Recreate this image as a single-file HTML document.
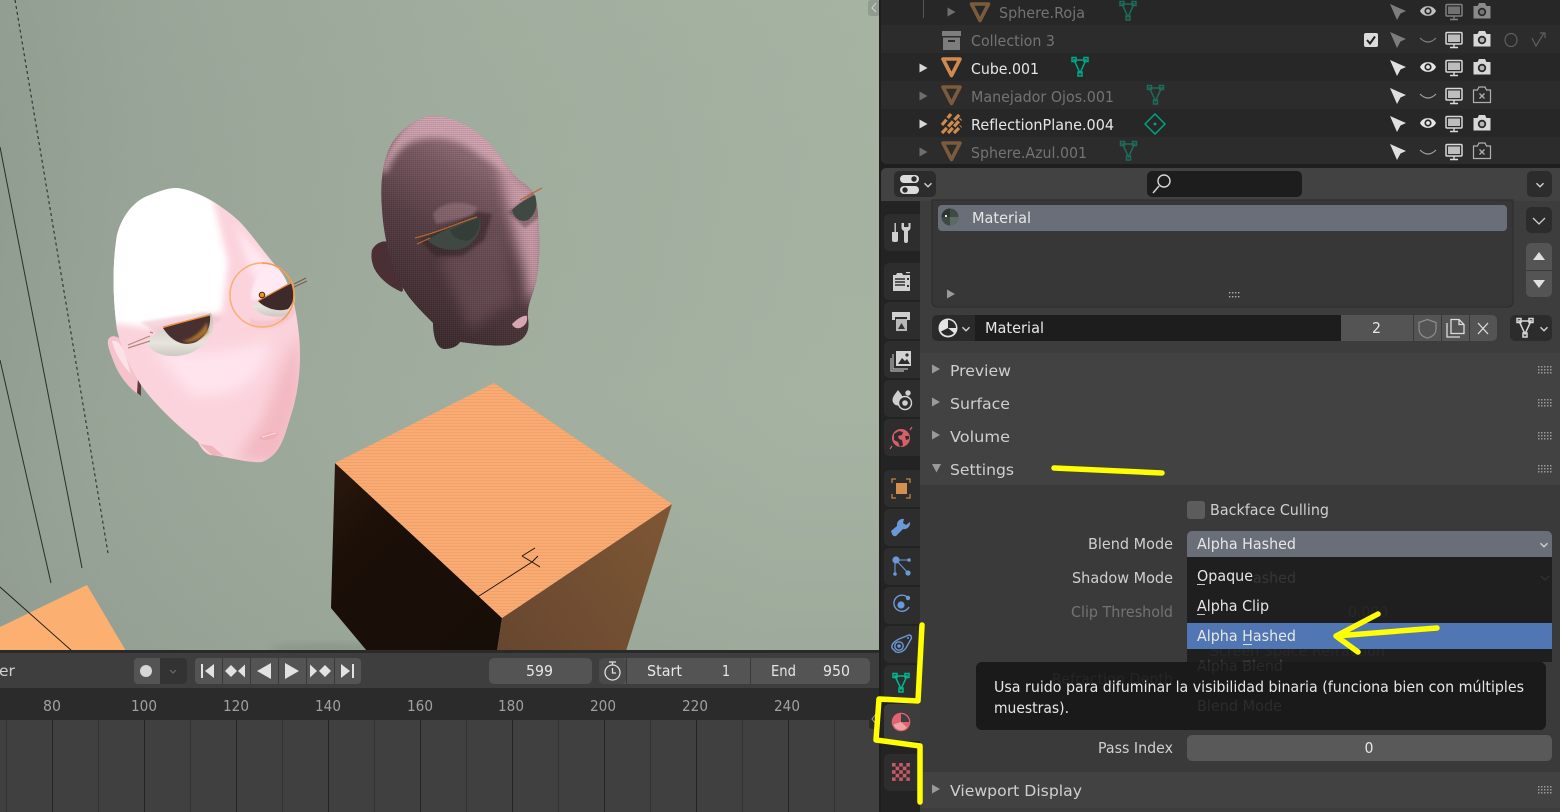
<!DOCTYPE html>
<html lang="es">
<head>
<meta charset="utf-8">
<title>Blender Material Settings</title>
<style>
html,body{margin:0;padding:0;width:1560px;height:812px;overflow:hidden;background:#232323}
svg{display:block;position:absolute;left:0;top:0}
text{font-family:"DejaVu Sans","Liberation Sans",sans-serif;font-size:15.5px;fill:#d8d8d8}
.dim{fill:#737373}.wh{fill:#e6e6e6}.lab{fill:#cfcfcf}.rul{fill:#a0a0a0}
</style>
</head>
<body>
<svg width="1560" height="812" viewBox="0 0 1560 812" xmlns="http://www.w3.org/2000/svg">
<defs>
<linearGradient id="bgx" x1="0" y1="0" x2="1" y2="0.15"><stop offset="0" stop-color="#8d9a8d"/><stop offset=".18" stop-color="#96a396"/><stop offset=".5" stop-color="#9fac9d"/><stop offset="1" stop-color="#a6b2a2"/></linearGradient>
<linearGradient id="bgy" x1="0" y1="0" x2="0" y2="1"><stop offset="0" stop-color="#a9b5a4" stop-opacity=".15"/><stop offset=".6" stop-color="#909c8f" stop-opacity="0"/><stop offset="1" stop-color="#808c80" stop-opacity=".22"/></linearGradient>
<linearGradient id="h2" gradientUnits="userSpaceOnUse" x1="400" y1="330" x2="510" y2="130"><stop offset="0" stop-color="#3a282b"/><stop offset=".45" stop-color="#563d43"/><stop offset=".72" stop-color="#7a5963"/><stop offset="1" stop-color="#b08a96"/></linearGradient>
<linearGradient id="cubeD" gradientUnits="userSpaceOnUse" x1="335" y1="470" x2="500" y2="640"><stop offset="0" stop-color="#2a180c"/><stop offset=".3" stop-color="#1b0f08"/><stop offset="1" stop-color="#180e08"/></linearGradient>
<linearGradient id="cubeR" gradientUnits="userSpaceOnUse" x1="500" y1="640" x2="660" y2="520"><stop offset="0" stop-color="#684730"/><stop offset="1" stop-color="#7c5634"/></linearGradient>
<linearGradient id="scl" x1="0" y1="0" x2="0" y2="1"><stop offset="0" stop-color="#c4c2b8"/><stop offset=".7" stop-color="#e6e4dc"/><stop offset="1" stop-color="#cbc9c1"/></linearGradient>
<pattern id="scan" width="3" height="3" patternUnits="userSpaceOnUse"><rect width="3" height="1" fill="#000" opacity=".05"/></pattern>
<pattern id="grid" width="2" height="2" patternUnits="userSpaceOnUse"><rect width="2" height="1" fill="#000" opacity=".1"/><rect width="1" height="2" fill="#fff" opacity=".04"/></pattern>
<pattern id="chk" x="892" y="763" width="7.2" height="7.2" patternUnits="userSpaceOnUse"><rect x="3.6" width="3.6" height="3.6" fill="#2d2d2d"/><rect y="3.6" width="3.6" height="3.6" fill="#2d2d2d"/></pattern>
<filter id="b1" x="-30%" y="-30%" width="160%" height="160%"><feGaussianBlur stdDeviation="7"/></filter>
<filter id="b3" x="-30%" y="-30%" width="160%" height="160%"><feGaussianBlur stdDeviation="3.5"/></filter>
<filter id="b2" x="-30%" y="-30%" width="160%" height="160%"><feGaussianBlur stdDeviation="1.3"/></filter>
<filter id="b4" x="-30%" y="-30%" width="160%" height="160%"><feGaussianBlur stdDeviation="6"/></filter>
<clipPath id="hc1"><path d="M177,188 C195,190 220,203 240,222 C255,238 268,258 278,268 C290,282 296,305 299,335 C302,365 298,395 290,418 C284,438 280,455 262,462 C245,463 225,456 210,455 C203,452 200,446 198,442 C180,428 155,405 141,385 C130,368 122,350 117,330 C113,300 112,265 117,235 C122,215 135,200 150,195 C160,191 168,188 177,188 Z"/></clipPath>
<clipPath id="hc"><path d="M435,116 C455,117 478,130 493,147 C505,162 512,175 522,182 C532,188 537,195 538,215 C540,240 540,262 536,282 C532,298 527,305 528,318 C530,330 527,340 510,345 C495,347 478,344 460,342 C458,346 452,349 444,349 C436,348 433,335 433,323 C420,310 410,300 403,288 C392,270 384,240 382,210 C380,185 382,160 392,143 C402,128 418,116 435,116Z"/></clipPath>

<g id="obj"><path d="M-8.5,-8 H8.5 L0,8.5 Z" fill="none" stroke="currentColor" stroke-width="3.6" stroke-linejoin="round"/></g>
<g id="mesh" fill="none" stroke="currentColor" stroke-width="1.5"><path d="M-6,-6 H6 L0,7 Z"/><rect x="-8" y="-8.5" width="4" height="4" /><rect x="4" y="-8.5" width="4" height="4"/><rect x="-2" y="6" width="4" height="4"/></g>
<g id="arrow"><path d="M-8,-8 L8,-1 L2.5,1.5 L-1,8 Z" fill="currentColor"/></g>
<g id="eye"><path d="M-8,0 C-5,-6.5 5,-6.5 8,0 C5,6.5 -5,6.5 -8,0 Z" fill="currentColor"/><circle r="3.6" fill="#2a2a2a"/><circle r="1.9" fill="currentColor"/></g>
<g id="hide"><path d="M-8,-2 Q0,6 8,-2" fill="none" stroke="currentColor" stroke-width="1.2"/></g>
<g id="mon"><rect x="-8" y="-7.5" width="16" height="11.5" rx="1" fill="none" stroke="currentColor" stroke-width="1.5"/><rect x="-6" y="-5.5" width="12" height="7.5" fill="currentColor" opacity=".85"/><path d="M0,4 V7 M-4,7.5 H4" stroke="currentColor" stroke-width="1.4"/></g>
<g id="cam"><path d="M-8.5,-5 H-4.5 L-3,-8 H3 L4.5,-5 H8.5 V7.5 H-8.5 Z" fill="currentColor"/><circle cy="1" r="4.2" fill="#2a2a2a"/><circle cy="1" r="2.4" fill="currentColor" opacity=".8"/></g>
<g id="camx"><path d="M-8.5,-5 H-4.5 L-3,-8 H3 L4.5,-5 H8.5 V7.5 H-8.5 Z" fill="none" stroke="currentColor" stroke-width="1.2"/><path d="M-2.5,-1.5 L2.5,3.5 M2.5,-1.5 L-2.5,3.5" stroke="currentColor" stroke-width="1.3"/></g>
<g id="chev"><path d="M-3.5,-1.8 L0,1.8 L3.5,-1.8" fill="none" stroke="#d0d0d0" stroke-width="1.4"/></g>
<g id="tr"><path d="M-4,-4.5 L4,0 L-4,4.5 Z" fill="currentColor"/></g>
<g id="grip" fill="#9a9a9a"><rect x="0" y="0" width="1.5" height="1.5"/><rect x="3" y="0" width="1.5" height="1.5"/><rect x="6" y="0" width="1.5" height="1.5"/><rect x="9" y="0" width="1.5" height="1.5"/><rect x="12" y="0" width="1.5" height="1.5"/><rect x="0" y="3" width="1.5" height="1.5"/><rect x="3" y="3" width="1.5" height="1.5"/><rect x="6" y="3" width="1.5" height="1.5"/><rect x="9" y="3" width="1.5" height="1.5"/><rect x="12" y="3" width="1.5" height="1.5"/><rect x="0" y="6" width="1.5" height="1.5"/><rect x="3" y="6" width="1.5" height="1.5"/><rect x="6" y="6" width="1.5" height="1.5"/><rect x="9" y="6" width="1.5" height="1.5"/><rect x="12" y="6" width="1.5" height="1.5"/></g>
</defs>

<!-- VIEWPORT -->
<rect x="0" y="0" width="880" height="651" fill="url(#bgx)"/>
<rect x="0" y="0" width="880" height="651" fill="url(#bgy)"/>

<!-- lines -->
<path d="M0,147 L82,568" stroke="#26302a" stroke-width="1" fill="none"/>
<path d="M0,360 L51,583" stroke="#26302a" stroke-width="1" fill="none"/>
<path d="M15,0 L108,553" stroke="#1d2420" stroke-width="1" stroke-dasharray="3 3" fill="none"/>

<!-- plane -->
<path d="M0,627 L87,585 L126,651 H0 Z" fill="#fbb071"/>
<path d="M0,587 L72,651" stroke="#1a1a14" stroke-width=".9" fill="none"/>

<!-- cube -->
<ellipse cx="330" cy="648" rx="60" ry="5" fill="#68725f" opacity=".25" filter="url(#b3)"/>
<path d="M335,463 L502,618 L497,651 H367 L331,608 Z" fill="url(#cubeD)"/>
<path d="M672,504 L502,618 L497,651 H626 Z" fill="url(#cubeR)"/>
<path d="M494,383 L672,504 L502,618 L335,463 Z" fill="#fbab72"/>
<path d="M494,383 L672,504 L502,618 L335,463 Z" fill="url(#scan)"/>
<path d="M395,650 L532,562 M522,556 L535,548 M522,556 L532,562 L540,567 M532,562 L538,556" stroke="#15100a" stroke-width=".9" fill="none"/>

<!-- head 1 -->
<path d="M108,340 C110,335 116,335 122,340 C130,350 136,370 141,385 L141,396 C130,390 118,375 113,360 C110,352 107,345 108,340Z" fill="#f6c2cb"/>
<path d="M112,341 C117,339 122,345 126,356 C128,364 130,370 131,374 C123,366 115,354 112,341Z" fill="#fbe2e8"/>
<path d="M138,378 L141,385 L141,396 L137,393 Z" fill="#5a3a40"/>
<path d="M177,188 C195,190 220,203 240,222 C255,238 268,258 278,268 C290,282 296,305 299,335 C302,365 298,395 290,418 C284,438 280,455 262,462 C245,463 225,456 210,455 C203,452 200,446 198,442 C180,428 155,405 141,385 C130,368 122,350 117,330 C113,300 112,265 117,235 C122,215 135,200 150,195 C160,191 168,188 177,188 Z" fill="#fbd3dc"/>
<g clip-path="url(#hc1)">
<path d="M300,330 L302,400 L280,465 L235,460 L262,420 L285,360 Z" fill="#f3b9c2" filter="url(#b1)"/>
<path d="M150,345 C190,360 240,350 270,340 C265,385 230,400 190,395 Z" fill="#ffe4ee" filter="url(#b1)"/>
<path d="M235,225 C255,250 280,270 292,300 L270,300 L250,270 Z" fill="#ffe6f0" filter="url(#b3)"/>
<path d="M105,265 L125,200 L177,180 L212,196 L228,262 L222,312 L150,328 L105,322 Z" fill="#fff" filter="url(#b3)"/>
<path d="M105,270 L125,205 L177,185 L205,200 L218,262 L212,305 L150,320 L105,315 Z" fill="#fff" filter="url(#b3)"/>
<path d="M140,322 L205,312 L222,318 L215,324 L160,335 Z" fill="#eec4cc" opacity=".6" filter="url(#b2)"/>
<path d="M252,300 C248,290 258,272 270,262 L295,284 L296,300 Z" fill="#ffe9f2" filter="url(#b2)"/>
<path d="M250,318 C265,325 285,320 296,300 L296,312 C285,328 262,332 250,325 Z" fill="#efb8c2" opacity=".5" filter="url(#b2)"/>
</g>
<!-- eyes head 1 -->
<path d="M146,342 C155,331 180,322 211,313 C218,330 207,347 188,354 C170,359 152,355 146,342 Z" fill="url(#scl)"/>
<path d="M163,328 L210,315 C211,328 206,336 196,342 C184,347 172,342 163,328 Z" fill="#47302f"/>
<path d="M182,341 C192,340 202,331 207,322 L208,332 C200,340 190,344 182,341 Z" fill="#a8702f" filter="url(#b2)"/>
<path d="M163,327 L210,315" stroke="#f08c2c" stroke-width="1.2"/>
<path d="M128,345 L150,336 M128,348 L150,341 M150,332 L153,333" stroke="#b08a7c" stroke-width="1.2" fill="none"/>
<path d="M252,306 L258,300 L292,282 C297,295 296,306 288,314 C278,319 260,317 252,306 Z" fill="url(#scl)"/>
<path d="M258,301 L292,283 C296,292 294,303 288,309 C278,312 266,309 258,301 Z" fill="#3f2a2b"/>
<path d="M258,301 L292,282" stroke="#f08c2c" stroke-width="1.1"/>
<path d="M294,284 L306,278 M294,287 L307,281" stroke="#7a5a4a" stroke-width="1" fill="none"/>
<circle cx="262" cy="295" r="32" fill="none" stroke="#fbae70" stroke-width="1.5"/>
<path d="M262,263 A32,32 0 0 1 294,295 A32,32 0 0 1 282,320" fill="none" stroke="#f79a4c" stroke-width="1.4"/>
<circle cx="262" cy="295" r="2.8" fill="#f5921c" stroke="#2a1a0a" stroke-width=".9"/>
<!-- mouth -->
<path d="M259,438 C264,433 272,430 278,433 L276,437 C270,440 264,442 259,438 Z" fill="#efb0b6"/>
<path d="M262,437 L276,433" stroke="#fbdde0" stroke-width="1"/>
<path d="M200,444 L212,455 L224,456 L212,446 Z" fill="#efb4bc"/>

<!-- head 2 -->
<path d="M372,250 C376,242 386,238 393,245 C398,252 401,275 403,290 L402,292 C392,288 380,280 374,268 C371,260 371,255 372,250Z" fill="#4a3034"/>
<path d="M435,116 C455,117 478,130 493,147 C505,162 512,175 522,182 C532,188 537,195 538,215 C540,240 540,262 536,282 C532,298 527,305 528,318 C530,330 527,340 510,345 C495,347 478,344 460,342 C458,346 452,349 444,349 C436,348 433,335 433,323 C420,310 410,300 403,288 C392,270 384,240 382,210 C380,185 382,160 392,143 C402,128 418,116 435,116Z" fill="url(#h2)"/>
<g clip-path="url(#hc)">
<path d="M440,260 L500,230 L515,300 L470,330 Z" fill="#7a5a62" opacity=".5" filter="url(#b4)"/>
<path d="M495,150 L525,182 L545,195 L545,285 L528,305 L524,270 L512,225 Z" fill="#d9a8b6" opacity=".85" filter="url(#b4)"/>
<path d="M380,170 C390,140 410,112 435,110 C462,110 484,126 502,152 L512,176 L480,156 C460,138 435,134 412,142 C400,148 392,158 386,174 Z" fill="#e0b0be" opacity=".8" filter="url(#b3)"/>
<path d="M433,214 C442,200 465,200 478,208 L472,216 L436,224 Z" fill="#a68089" opacity=".5" filter="url(#b2)"/>
<path d="M420,240 L478,212 L492,214 L484,240 L462,256 L435,256 Z" fill="#2c1d1f" opacity=".5" filter="url(#b2)"/>
<path d="M508,212 L536,190 L542,215 L525,228 Z" fill="#2c1d1f" opacity=".35" filter="url(#b2)"/>
<rect x="372" y="100" width="188" height="260" fill="url(#grid)"/>
</g>
<path d="M427,240 C440,232 462,222 479,217 C483,228 478,238 468,246 C458,252 440,252 427,240Z" fill="#3f4842"/>
<path d="M450,230 C460,225 472,220 479,218 C481,226 478,234 470,240 C462,242 452,238 450,230 Z" fill="#353d38"/>
<path d="M512,210 C518,204 528,198 535,195 C538,205 536,214 528,220 C520,223 514,218 512,210Z" fill="#3f4842"/>
<path d="M415,238 C440,232 460,222 477,217 M520,200 L542,188 M417,244 L430,238" stroke="#b8682c" stroke-width="1.2" fill="none"/>
<path d="M512,324 C518,318 524,315 527,316 C528,322 525,326 520,328 C516,329 513,327 512,324 Z" fill="#d8a6b0"/>

<!-- viewport corner widget -->
<rect x="868" y="0" width="12" height="16" rx="3" fill="#8f9c8f"/>
<path d="M876,3 L872,8 L876,12" fill="none" stroke="#cfd5cb" stroke-width="1"/>

<!-- TIMELINE -->
<rect x="0" y="650" width="880" height="4" fill="#2a2a2a"/>
<rect x="0" y="653" width="880" height="35" fill="#3e3e3e"/>
<rect x="0" y="688" width="880" height="32" fill="#2b2b2b"/>
<rect x="0" y="720" width="880" height="92" fill="#404040"/>
<g stroke="#333" stroke-width="1"><path d="M6.5,720V812M98.5,720V812M190.5,720V812M282.5,720V812M374.5,720V812M466.5,720V812M558.5,720V812M650.5,720V812M742.5,720V812M834.5,720V812"/></g>
<g stroke="#242424" stroke-width="1"><path d="M52.5,720V812M144.5,720V812M236.5,720V812M328.5,720V812M420.5,720V812M512.5,720V812M604.5,720V812M696.5,720V812M788.5,720V812"/></g>
<text x="-1" y="676" class="lab">er</text>
<g>
<rect x="134" y="658" width="53" height="26" rx="4" fill="#545454"/>
<path d="M160,658 H183 a4,4 0 0 1 4,4 V680 a4,4 0 0 1 -4,4 H160 Z" fill="#333"/>
<ellipse cx="146" cy="671" rx="6" ry="6" fill="#d6d6d6"/>
<path d="M170,670 L173,673 L176,670" fill="none" stroke="#6a6a6a" stroke-width="1.2"/>
<rect x="195" y="658" width="166" height="26" rx="4" fill="#545454"/>
<path d="M222.5,658V684M250.5,658V684M278.5,658V684M306.5,658V684M334.5,658V684" stroke="#3a3a3a" stroke-width="1"/>
<g fill="#e2e2e2">
<rect x="201" y="664" width="2" height="14"/><path d="M214,664 V678 L205,671 Z"/>
<path d="M225,671 L231,665 L237,671 L231,677 Z"/><path d="M245,664.5 V677.5 L238,671 Z"/>
<path d="M271,663 V679 L257,671 Z"/>
<path d="M285,663 V679 L299,671 Z"/>
<path d="M310,664.5 V677.5 L317,671 Z"/><path d="M319,671 L325,665 L331,671 L325,677 Z"/>
<path d="M341,664 V678 L350,671 Z"/><rect x="352" y="664" width="2" height="14"/>
</g>
<rect x="489" y="658" width="103" height="26" rx="5" fill="#545454"/>
<text x="526" y="676" class="wh" textLength="27" lengthAdjust="spacingAndGlyphs">599</text>
<rect x="599" y="658" width="271" height="26" rx="5" fill="#545454"/>
<rect x="599" y="658" width="27" height="26" rx="5" fill="#4a4a4a"/>
<path d="M626.5,658V684M750.5,658V684" stroke="#3a3a3a" stroke-width="1"/>
<g fill="none" stroke="#dedede" stroke-width="1.3"><circle cx="612.5" cy="672.5" r="7.5"/><path d="M612.5,668 V673 H616 M609,662 H616 M612.5,662 V665"/></g>
<text x="647" y="676" class="wh" textLength="35" lengthAdjust="spacingAndGlyphs">Start</text>
<text x="722" y="676" class="wh" textLength="8" lengthAdjust="spacingAndGlyphs">1</text>
<text x="771" y="676" class="wh" textLength="25" lengthAdjust="spacingAndGlyphs">End</text>
<text x="823" y="676" class="wh" textLength="27" lengthAdjust="spacingAndGlyphs">950</text>
</g>
<g class="rul">
<text x="43" y="711" class="rul" textLength="18" lengthAdjust="spacingAndGlyphs">80</text>
<text x="131" y="711" class="rul" textLength="26" lengthAdjust="spacingAndGlyphs">100</text>
<text x="223" y="711" class="rul" textLength="26" lengthAdjust="spacingAndGlyphs">120</text>
<text x="315" y="711" class="rul" textLength="26" lengthAdjust="spacingAndGlyphs">140</text>
<text x="407" y="711" class="rul" textLength="26" lengthAdjust="spacingAndGlyphs">160</text>
<text x="498" y="711" class="rul" textLength="26" lengthAdjust="spacingAndGlyphs">180</text>
<text x="590" y="711" class="rul" textLength="26" lengthAdjust="spacingAndGlyphs">200</text>
<text x="682" y="711" class="rul" textLength="26" lengthAdjust="spacingAndGlyphs">220</text>
<text x="774" y="711" class="rul" textLength="26" lengthAdjust="spacingAndGlyphs">240</text>
</g>
<rect x="869" y="709" width="11" height="20" rx="3" fill="#2b2b2b"/>
<path d="M876,714 L872,719 L876,724" fill="none" stroke="#a0a0a0" stroke-width="1"/>

<!-- RIGHT COLUMN BG -->
<rect x="879" y="0" width="681" height="812" fill="#1e1e1e"/>

<!-- OUTLINER -->
<rect x="881" y="-3" width="679" height="28" fill="#272727"/>
<rect x="881" y="25" width="679" height="28" fill="#2c2c2c"/>
<rect x="881" y="53" width="679" height="28" fill="#272727"/>
<rect x="881" y="81" width="679" height="28" fill="#2c2c2c"/>
<rect x="881" y="109" width="679" height="28" fill="#272727"/>
<path d="M881,137 H1560 V164 H886 a5,5 0 0 1 -5,-5 Z" fill="#2c2c2c"/>
<path d="M923.5,0V18" stroke="#555" stroke-width="1"/>

<use href="#tr" x="951.5" y="12" color="#6e6e6e"/>
<use href="#obj" x="980" y="12" color="#7c5a3c"/>
<text x="999" y="18" class="dim" textLength="86" lengthAdjust="spacingAndGlyphs">Sphere.Roja</text>
<use href="#mesh" x="1128" y="10" color="#1d6b58"/>

<g fill="#7d7d7d"><rect x="942" y="31" width="19" height="5"/><path d="M943,37.5 H960 V50 H943 Z"/></g>
<rect x="948" y="40" width="7" height="2" fill="#2c2c2c"/>
<text x="971" y="46" class="dim" textLength="84" lengthAdjust="spacingAndGlyphs">Collection 3</text>

<use href="#tr" x="923.5" y="68" color="#d8d8d8"/>
<use href="#obj" x="951.5" y="67" color="#d08a4e"/>
<text x="971" y="74" class="wh" textLength="68" lengthAdjust="spacingAndGlyphs">Cube.001</text>
<use href="#mesh" x="1080" y="66" color="#00a887"/>

<use href="#tr" x="923.5" y="96" color="#6e6e6e"/>
<use href="#obj" x="951.5" y="95" color="#7c5a3c"/>
<text x="971" y="102" class="dim" textLength="143" lengthAdjust="spacingAndGlyphs">Manejador Ojos.001</text>
<use href="#mesh" x="1155.5" y="94" color="#1d6b58"/>

<use href="#tr" x="923.5" y="124" color="#d8d8d8"/>
<g stroke="#d08a4e" stroke-width="3.2" fill="none" stroke-dasharray="7 2"><path d="M942,125 L951,114 M942,133 L960,114 M948,133 L961,119 M954,133 L961,126"/></g>
<text x="971" y="130" class="wh" textLength="143" lengthAdjust="spacingAndGlyphs">ReflectionPlane.004</text>
<path d="M1155,114 L1165,124 L1155,134 L1145,124 Z" fill="none" stroke="#00a887" stroke-width="1.4"/>
<circle cx="1155" cy="124" r="1.4" fill="#00a887"/>

<use href="#tr" x="923.5" y="152" color="#6e6e6e"/>
<use href="#obj" x="951.5" y="151" color="#7c5a3c"/>
<text x="971" y="158" class="dim" textLength="116" lengthAdjust="spacingAndGlyphs">Sphere.Azul.001</text>
<use href="#mesh" x="1128.5" y="150" color="#1d6b58"/>

<!-- right outliner icons -->
<use href="#arrow" x="1398" y="12" color="#7d7d7d"/><use href="#eye" x="1428" y="11" color="#c0c0c0"/><use href="#mon" x="1454" y="12" color="#808080"/><use href="#cam" x="1482" y="11" color="#8a8a8a"/>
<rect x="1364" y="33" width="14" height="14" rx="2" fill="#dcdcdc"/><path d="M1367,40 L1370,43.5 L1375,36.5" fill="none" stroke="#222" stroke-width="2"/>
<use href="#arrow" x="1398" y="40" color="#7d7d7d"/><use href="#hide" x="1428" y="40" color="#808080"/><use href="#mon" x="1454" y="40" color="#d8d8d8"/><use href="#cam" x="1482" y="39" color="#d8d8d8"/>
<ellipse cx="1511" cy="40" rx="6" ry="6.5" fill="none" stroke="#5f5f5f" stroke-width="1.2"/><path d="M1532,38 L1536,46 L1544,33 M1540,33 H1545 V38" fill="none" stroke="#5f5f5f" stroke-width="1.2"/>
<use href="#arrow" x="1398" y="68" color="#e0e0e0"/><use href="#eye" x="1428" y="67" color="#e6e6e6"/><use href="#mon" x="1454" y="68" color="#d8d8d8"/><use href="#cam" x="1482" y="67" color="#d8d8d8"/>
<use href="#arrow" x="1398" y="96" color="#e0e0e0"/><use href="#hide" x="1428" y="96" color="#a0a0a0"/><use href="#mon" x="1454" y="96" color="#d8d8d8"/><use href="#camx" x="1482" y="95" color="#b0b0b0"/>
<use href="#arrow" x="1398" y="124" color="#e0e0e0"/><use href="#eye" x="1428" y="123" color="#e6e6e6"/><use href="#mon" x="1454" y="124" color="#d8d8d8"/><use href="#cam" x="1482" y="123" color="#d8d8d8"/>
<use href="#arrow" x="1398" y="152" color="#e0e0e0"/><use href="#hide" x="1428" y="152" color="#a0a0a0"/><use href="#mon" x="1454" y="152" color="#d8d8d8"/><use href="#camx" x="1482" y="151" color="#b0b0b0"/>

<!-- PROPERTIES HEADER -->
<path d="M881,173 a5,5 0 0 1 5,-5 H1560 V201 H881 Z" fill="#424242"/>
<rect x="894" y="171" width="42" height="26" rx="5" fill="#2c2c2c"/>
<rect x="900" y="175" width="19" height="8" rx="4" fill="#dcdcdc"/><circle cx="914" cy="179" r="2.7" fill="#2c2c2c"/>
<rect x="900" y="186" width="19" height="8" rx="4" fill="#dcdcdc"/><circle cx="905" cy="190" r="2.7" fill="#2c2c2c"/>
<use href="#chev" x="928" y="185"/>
<rect x="1147" y="171" width="155" height="26" rx="5" fill="#1d1d1d"/>
<circle cx="1164" cy="181" r="6" fill="none" stroke="#d8d8d8" stroke-width="1.4"/><path d="M1159,186 L1153,193" stroke="#d8d8d8" stroke-width="1.4"/>
<rect x="1527" y="171" width="25" height="26" rx="5" fill="#2c2c2c"/><use href="#chev" x="1540" y="185"/>

<!-- TABS -->
<rect x="881" y="201" width="39" height="611" fill="#232323"/>
<g fill="#2d2d2d">
<path d="M889,214 H920 V251 H889 a5,5 0 0 1 -5,-5 V219 a5,5 0 0 1 5,-5Z"/>
<path d="M889,263 H920 V300 H889 a5,5 0 0 1 -5,-5 V268 a5,5 0 0 1 5,-5Z"/>
<path d="M889,302 H920 V339 H889 a5,5 0 0 1 -5,-5 V307 a5,5 0 0 1 5,-5Z"/>
<path d="M889,341 H920 V378 H889 a5,5 0 0 1 -5,-5 V346 a5,5 0 0 1 5,-5Z"/>
<path d="M889,380 H920 V417 H889 a5,5 0 0 1 -5,-5 V385 a5,5 0 0 1 5,-5Z"/>
<path d="M889,419 H920 V456 H889 a5,5 0 0 1 -5,-5 V424 a5,5 0 0 1 5,-5Z"/>
<path d="M889,470 H920 V507 H889 a5,5 0 0 1 -5,-5 V475 a5,5 0 0 1 5,-5Z"/>
<path d="M889,509 H920 V546 H889 a5,5 0 0 1 -5,-5 V514 a5,5 0 0 1 5,-5Z"/>
<path d="M889,548 H920 V585 H889 a5,5 0 0 1 -5,-5 V553 a5,5 0 0 1 5,-5Z"/>
<path d="M889,587 H920 V624 H889 a5,5 0 0 1 -5,-5 V592 a5,5 0 0 1 5,-5Z"/>
<path d="M889,626 H920 V663 H889 a5,5 0 0 1 -5,-5 V631 a5,5 0 0 1 5,-5Z"/>
<path d="M889,665 H920 V702 H889 a5,5 0 0 1 -5,-5 V670 a5,5 0 0 1 5,-5Z"/>
<path d="M889,754 H920 V791 H889 a5,5 0 0 1 -5,-5 V759 a5,5 0 0 1 5,-5Z"/>
</g>
<path d="M889,704 H920 V741 H889 a5,5 0 0 1 -5,-5 V709 a5,5 0 0 1 5,-5Z" fill="#3d3d3d"/>

<!-- tab icons -->
<g fill="#cfcfcf">
<rect x="894.5" y="223" width="1.4" height="9"/><path d="M892,232 h6 v8 a2,2 0 0 1 -2,2 h-2 a2,2 0 0 1 -2,-2 Z"/>
<path d="M901.5,223 v4 a4,4 0 0 0 2.5,4 v10 a2,2 0 0 0 4,0 v-10 a4,4 0 0 0 2.5,-4 v-4 l-2,0 v4 h-4.5 v-4 Z"/>
<path d="M893,275 h3 l1,-2 h5 l1,2 h7 v16 h-17 Z"/><rect x="906" y="272" width="4" height="1.2"/><path d="M895,279 h10 M895,282 h10 M895,285 h10" stroke="#2d2d2d" stroke-width="1.4"/><rect x="907" y="278" width="2" height="2" fill="#2d2d2d"/><rect x="907" y="285" width="2" height="2" fill="#2d2d2d"/>
<path d="M892,312 h18 v8 h-3 v-3 h-12 v3 h-3 Z"/><rect x="896" y="319" width="11" height="12" fill="#b8b8b8"/><path d="M898,329 l3.5,-6 l3.5,6 Z" fill="#333"/>
<rect x="896" y="351" width="15" height="15" fill="#d4d4d4"/><path d="M898,364 l4,-6 l3,3 l2,-2 l3,5 Z" fill="#2d2d2d"/><circle cx="907" cy="355" r="1.6" fill="#2d2d2d"/>
<path d="M893,354 v15 h15 M891,358 v13 h13" fill="none" stroke="#b8b8b8" stroke-width="1.2"/>
<path d="M898,390 c3,4 5.5,7 5.5,10 a5.5,5.5 0 0 1 -11,0 c0,-3 2.500,-6 5.500,-10 Z"/><circle cx="908" cy="393" r="2.7"/><circle cx="905" cy="403" r="6.5" fill="#2d2d2d" stroke="#d4d4d4" stroke-width="1.4"/><circle cx="905" cy="403" r="2.8"/>
</g>
<g><circle cx="901" cy="438" r="9" fill="#d65f69"/><path d="M894,434 l5,-3 l4,1 l-1,3 l-4,1 l1,3 l3,1 l1,5 l-3,2 l-2,-5 l-4,-2 Z" fill="#2d2d2d"/><path d="M905,436 l4,0 l0,3 l-3,1 Z" fill="#2d2d2d"/><path d="M892,446 l-2,3 M910,430 l2,-3" stroke="#d65f69" stroke-width="1.2"/></g>
<rect x="896" y="483" width="11" height="11" fill="#d4904f"/><path d="M892,483 v-4 h4 M906,479 h4 v4 M910,494 v4 h-4 M896,498 h-4 v-4" fill="none" stroke="#c48348" stroke-width="1.3"/>
<path d="M892,535 a3,3 0 0 0 4,2 l7,-7 a6,6 0 0 0 7,-7 l-4,3 l-3,-2 l1,-4 a6,6 0 0 0 -7,7 l-6,5 Z" fill="#6b99d8" transform="translate(0,-1)"/>
<g fill="#6b99d8"><circle cx="896" cy="560" r="3.6"/><circle cx="909" cy="560" r="1.8"/><circle cx="908" cy="573" r="2.6"/><circle cx="895" cy="574" r="1.8"/><path d="M896,560 H909 M896,560 L908,573 M895,560 V574" stroke="#6b99d8" stroke-width="1.1"/></g>
<g fill="none" stroke="#6b99d8" stroke-width="1.4"><path d="M908,598 a8,8 0 1 0 1,9"/></g><circle cx="901" cy="605" r="3.6" fill="#6b99d8"/><circle cx="908" cy="598" r="2.2" fill="#6b99d8"/>
<g fill="none" stroke="#6b99d8" stroke-width="1.4"><path d="M892,648 c-1,-4 3,-7 7,-9 l10,-4 c2,0 3,2 2,4 l-5,9 c-3,4 -7,5 -10,4 Z"/><circle cx="899" cy="646" r="4.2"/></g><circle cx="899" cy="646" r="1.8" fill="#6b99d8"/><circle cx="908" cy="638" r="1" fill="#6b99d8"/>
<use href="#mesh" x="901" y="682" color="#00b890"/>
<circle cx="901" cy="722" r="9.3" fill="#e0646d"/>
<path d="M901,714 V722 H909 A8,8 0 0 0 901,714 Z" fill="#3d3d3d"/>
<path d="M893.5,724.5 L901,722 L907,727.500 A8,8 0 0 1 893.500,724.500 Z" fill="#f0a0a6"/>
<rect x="892" y="763" width="18" height="18" fill="#c75a66"/>
<rect x="892" y="763" width="18" height="18" fill="url(#chk)"/>

<!-- MAIN PANEL -->
<rect x="920" y="201" width="640" height="611" fill="#3d3d3d"/>
<path d="M932,200 H1513 V302 a5,5 0 0 1 -5,5 H937 a5,5 0 0 1 -5,-5 Z" fill="#373737" stroke="#2c2c2c" stroke-width="1"/>
<rect x="938" y="205" width="569" height="26" rx="4" fill="#6a6e78"/>
<circle cx="950" cy="217" r="8.5" fill="#3e4a44"/><path d="M950,208.5 V217 H941.5 A8.5,8.5 0 0 1 950,208.5Z" fill="#2e3632"/><path d="M950,217 H958.5 A8.5,8.5 0 0 1 950,225.5 Z" fill="#5d6a64"/><rect x="945" y="215" width="2" height="2" fill="#e8e8e8"/>
<text x="972" y="223" class="wh" textLength="59" lengthAdjust="spacingAndGlyphs">Material</text>
<use href="#tr" x="951" y="294" color="#9a9a9a"/>
<g fill="#b0b0b0"><rect x="1229" y="292" width="1.4" height="1.4"/><rect x="1232" y="292" width="1.4" height="1.4"/><rect x="1235" y="292" width="1.4" height="1.4"/><rect x="1238" y="292" width="1.4" height="1.4"/><rect x="1229" y="296" width="1.4" height="1.4"/><rect x="1232" y="296" width="1.4" height="1.4"/><rect x="1235" y="296" width="1.4" height="1.4"/><rect x="1238" y="296" width="1.4" height="1.4"/></g>
<rect x="1526" y="207" width="26" height="26" rx="5" fill="#2c2c2c"/>
<path d="M1533,218 L1539,224 L1545,218" fill="none" stroke="#cfcfcf" stroke-width="1.3"/>
<rect x="1526" y="243" width="26" height="54" rx="5" fill="#545454"/><path d="M1526,270.5 H1552" stroke="#3a3a3a"/>
<path d="M1539,252 L1545,260 H1533 Z" fill="#e0e0e0"/><path d="M1533,280 H1545 L1539,288 Z" fill="#e0e0e0"/>

<!-- material slot row -->
<path d="M937,315 H975 V341 H937 a5,5 0 0 1 -5,-5 V320 a5,5 0 0 1 5,-5Z" fill="#2a2a2a"/>
<circle cx="948" cy="328" r="9.5" fill="#e4e4e4"/><path d="M948,320 V328 H956 A8,8 0 0 0 948,320Z" fill="#2a2a2a"/><path d="M941,331.500 L948,328 L954,333 A8,8 0 0 1 941,331.500 Z" fill="#2a2a2a"/>
<use href="#chev" x="966" y="329"/>
<rect x="975" y="315" width="366" height="26" fill="#1d1d1d"/>
<text x="985" y="333" class="wh" textLength="59" lengthAdjust="spacingAndGlyphs">Material</text>
<path d="M1341,315 H1492 a5,5 0 0 1 5,5 V336 a5,5 0 0 1 -5,5 H1341 Z" fill="#545454"/>
<path d="M1413.5,315V341M1441.5,315V341M1469.5,315V341" stroke="#3a3a3a"/>
<text x="1372" y="333" class="wh" textLength="9" lengthAdjust="spacingAndGlyphs">2</text>
<path d="M1427.5,319.5 L1436,322.5 V329 C1436,334 1432,337 1427.5,338 C1423,337 1419,334 1419,329 V322.5 Z" fill="none" stroke="#8a8a8a" stroke-width="1.3"/>
<path d="M1447,323 v14 h13 M1451,319.5 h8 l5,5 v9 h-13 Z M1459,319.5 v5 h5" fill="none" stroke="#dcdcdc" stroke-width="1.3"/>
<path d="M1478,323 L1488,334 M1488,323 L1478,334" stroke="#dcdcdc" stroke-width="1.3"/>
<rect x="1510" y="315" width="42" height="26" rx="5" fill="#2c2c2c"/>
<use href="#mesh" x="1525" y="327" color="#d8d8d8"/><use href="#chev" x="1544" y="329"/>

<!-- PANEL HEADERS -->
<rect x="920" y="353" width="640" height="132" fill="#424242"/>
<rect x="920" y="485" width="640" height="287" fill="#3a3a3a"/>
<rect x="920" y="772" width="640" height="36" fill="#424242"/>
<use href="#tr" x="936" y="369" color="#9a9a9a"/><text x="950" y="376" class="lab" textLength="61" lengthAdjust="spacingAndGlyphs">Preview</text><use href="#grip" x="1538" y="366"/>
<use href="#tr" x="936" y="402" color="#9a9a9a"/><text x="950" y="409" class="lab" textLength="60" lengthAdjust="spacingAndGlyphs">Surface</text><use href="#grip" x="1538" y="399"/>
<use href="#tr" x="936" y="435" color="#9a9a9a"/><text x="950" y="442" class="lab" textLength="60" lengthAdjust="spacingAndGlyphs">Volume</text><use href="#grip" x="1538" y="432"/>
<path d="M932,464 H941 L936.5,472.500 Z" fill="#9a9a9a"/><text x="950" y="475" class="lab" textLength="64" lengthAdjust="spacingAndGlyphs">Settings</text><use href="#grip" x="1538" y="465"/>
<use href="#tr" x="936" y="789" color="#9a9a9a"/><text x="950" y="796" class="lab" textLength="132" lengthAdjust="spacingAndGlyphs">Viewport Display</text><use href="#grip" x="1538" y="786"/>

<!-- SETTINGS BODY -->
<rect x="1187" y="501" width="18" height="18" rx="3" fill="#5c5c5c"/>
<text x="1210" y="515" class="lab" textLength="119" lengthAdjust="spacingAndGlyphs">Backface Culling</text>
<text x="1088" y="549" class="lab" textLength="85" lengthAdjust="spacingAndGlyphs">Blend Mode</text>
<text x="1072" y="583" class="lab" textLength="101" lengthAdjust="spacingAndGlyphs">Shadow Mode</text>
<text x="1071" y="617" class="dim" textLength="102" lengthAdjust="spacingAndGlyphs">Clip Threshold</text>
<path d="M1187,536 a5,5 0 0 1 5,-5 H1547 a5,5 0 0 1 5,5 V557 H1187 Z" fill="#6a6e78"/>
<text x="1197" y="549" class="wh" textLength="99" lengthAdjust="spacingAndGlyphs">Alpha Hashed</text>
<use href="#chev" x="1544" y="545"/>
<!-- dropdown menu -->
<rect x="1187" y="557" width="365" height="105" fill="#1f1f1f"/>
<text x="1253" y="583" style="fill:#363636" textLength="43" lengthAdjust="spacingAndGlyphs">ashed</text>
<path d="M1541,576 L1545,580 L1549,576" fill="none" stroke="#333" stroke-width="1.2"/>
<text x="1348" y="617" style="fill:#282828" textLength="40" lengthAdjust="spacingAndGlyphs">0.000</text>
<text x="1197" y="581" class="wh" textLength="56" lengthAdjust="spacingAndGlyphs">Opaque</text>
<rect x="1197" y="584" width="8" height="1" fill="#c8c8c8"/>
<text x="1197" y="611" class="wh" textLength="72" lengthAdjust="spacingAndGlyphs">Alpha Clip</text>
<rect x="1197" y="614" width="8" height="1" fill="#c8c8c8"/>
<text x="1210" y="656" style="fill:#282828" textLength="175" lengthAdjust="spacingAndGlyphs">Screen Space Refraction</text>
<rect x="1187" y="623" width="365" height="26" fill="#5076b4"/>
<text x="1197" y="641" class="wh" textLength="99" lengthAdjust="spacingAndGlyphs">Alpha Hashed</text>
<rect x="1243" y="644" width="9" height="1" fill="#dcdcdc"/>
<text x="1197" y="671" class="lab" textLength="86" lengthAdjust="spacingAndGlyphs">Alpha Blend</text>

<!-- tooltip -->
<rect x="976" y="662" width="570" height="68" rx="6" fill="#1a1a1a"/>
<text x="1197" y="671" style="fill:#2a2a2a" textLength="86" lengthAdjust="spacingAndGlyphs">Alpha Blend</text>
<text x="1052" y="684" style="fill:#252525" textLength="121" lengthAdjust="spacingAndGlyphs">Refraction Depth</text>
<text x="1197" y="711" style="fill:#2c2c2c" textLength="85" lengthAdjust="spacingAndGlyphs">Blend Mode</text>
<text x="994" y="692" class="wh" textLength="530" lengthAdjust="spacingAndGlyphs">Usa ruido para difuminar la visibilidad binaria (funciona bien con múltiples</text>
<text x="994" y="713" class="wh" textLength="75" lengthAdjust="spacingAndGlyphs">muestras).</text>

<!-- pass index -->
<text x="1098" y="753" class="lab" textLength="75" lengthAdjust="spacingAndGlyphs">Pass Index</text>
<rect x="1187" y="735" width="365" height="26" rx="5" fill="#595959"/>
<text x="1364.500" y="753" class="wh" textLength="9" lengthAdjust="spacingAndGlyphs">0</text>

<!-- YELLOW ANNOTATIONS -->
<g fill="none" stroke="#ffff00" stroke-linecap="round" stroke-linejoin="round">
<path d="M1054,468 L1162,473" stroke-width="5.5"/>
<path d="M1437,628 L1336,636 M1378,614 L1336,636 L1358,652" stroke-width="5.5"/>
<path d="M922,625 L918,701 L879,699 L876,740 L920,746 L920,802" stroke-width="5.5"/>
</g>
</svg>
</body>
</html>
